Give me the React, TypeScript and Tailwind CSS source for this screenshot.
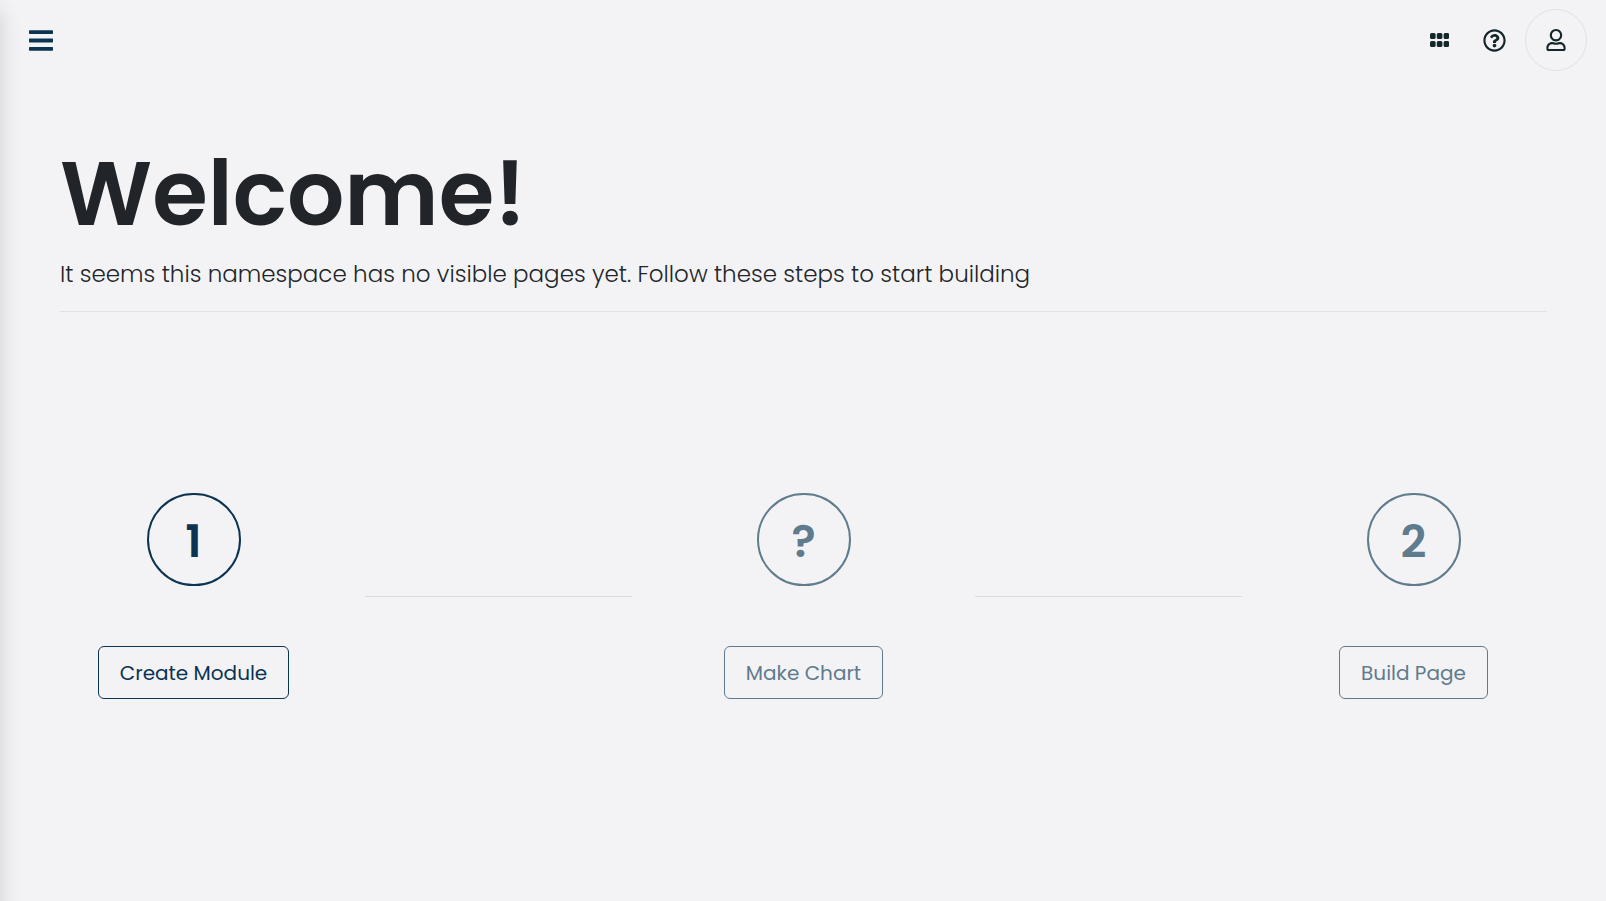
import { Fragment } from "react";
import { FaRegQuestionCircle, FaRegUser } from "react-icons/fa";

type Step = { mark: string; label: string; active: boolean };

const steps: Step[] = [
  { mark: "1", label: "Create Module", active: true },
  { mark: "?", label: "Make Chart", active: false },
  { mark: "2", label: "Build Page", active: false },
];

function MenuIcon() {
  return (
    <svg width="24" height="22" viewBox="0 0 24 22" fill="currentColor" aria-hidden="true">
      <rect y="1.3" width="24" height="3.7" rx="0.7" />
      <rect y="9.4" width="24" height="4" rx="0.7" />
      <rect y="18" width="24" height="3.8" rx="0.7" />
    </svg>
  );
}

function GridIcon() {
  return (
    <svg width="19" height="14" viewBox="0 0 19 14" fill="currentColor" aria-hidden="true">
      {[0, 8].map((y) =>
        [0, 6.8, 13.6].map((x) => <rect key={`${x}-${y}`} x={x} y={y} width="5.6" height="6" rx="1.6" />),
      )}
    </svg>
  );
}

function TopBar() {
  return (
    <header className="flex h-20 items-center justify-between pr-[19px] pl-[29px]">
      <button type="button" aria-label="Toggle menu" className="text-[#0b3452]">
        <MenuIcon />
      </button>
      <div className="flex items-center text-[#14262a]">
        <button type="button" aria-label="Applications" className="flex w-[55px] justify-center">
          <GridIcon />
        </button>
        <button type="button" aria-label="Help" className="flex w-[55px] justify-center">
          <FaRegQuestionCircle size={23} />
        </button>
        <button
          type="button"
          aria-label="Account"
          className="ml-[3px] flex size-[62px] items-center justify-center rounded-full border border-[#dee2e6]"
        >
          <FaRegUser size={22} />
        </button>
      </div>
    </header>
  );
}

function StepItem({ mark, label, active }: Step) {
  return (
    <li
      className={`flex flex-col items-center gap-[60px] ${
        active ? "text-[#0b3452]" : "text-[#5f7b8e]"
      }`}
    >
      <span className="flex h-[93px] w-[94px] items-center justify-center rounded-full border-2 border-current pt-1 text-[45px] leading-none font-semibold">
        {mark}
      </span>
      <button
        type="button"
        disabled={!active}
        className="rounded-md border border-current px-[21px] pt-[13px] pb-[11px] text-xl leading-[27px] whitespace-nowrap"
      >
        {label}
      </button>
    </li>
  );
}

export default function App() {
  return (
    <div className="relative min-h-screen overflow-hidden bg-[#f3f3f5] font-[Poppins,Inter,sans-serif] text-[#212529]">
      <div className="absolute top-0 -bottom-10 -left-20 w-20 shadow-[0_10px_20px_rgba(0,0,0,0.15)]" />
      <TopBar />
      <main className="pt-[60px] pr-[59px] pl-[60px]">
        <h1 className="text-[90px] leading-[108px] font-semibold">Welcome!</h1>
        <p className="mt-[6px] text-[23px] leading-10 font-light">
          It seems this namespace has no visible pages yet. Follow these steps to start building
        </p>
        <hr className="mt-[17px] border-[#dfe1e4]" />
        <ol className="-mx-[19px] mt-[181px] grid grid-cols-5 items-center pb-10">
          {steps.map((step, i) => (
            <Fragment key={step.label}>
              {i > 0 && (
                <li aria-hidden="true" className="px-[19px]">
                  <hr className="border-[#d9dbde]" />
                </li>
              )}
              <StepItem {...step} />
            </Fragment>
          ))}
        </ol>
      </main>
    </div>
  );
}
